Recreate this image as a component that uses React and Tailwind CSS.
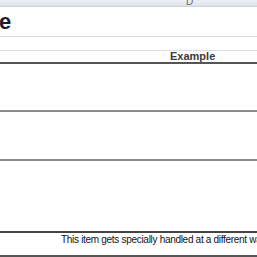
import React from "react";

const rows = [
  { h: "h-[48px]", line: "border-b-[#8a8a8a]" },
  { h: "h-[49px]", line: "border-b-[#8a8a8a]" },
  { h: "h-[72px]", line: "border-b-[#444]" },
];

export default function App() {
  return (
    <div className="w-[257px] h-[257px] overflow-hidden bg-white font-['Liberation_Sans',Arial,sans-serif]">
      {/* top bar */}
      <div className="h-[7px] bg-gradient-to-b from-[#eef1f6] to-[#dde2ea] border-b border-[#cfd5df] relative">
        <span className="absolute left-[186px] -top-[6px] text-[10px] text-[#666]">D</span>
      </div>

      {/* title */}
      <div className="h-[30px] border-b border-[#dcdcdc] flex items-center">
        <span className="text-[22px] font-bold text-[#1a1d33] -ml-[1px] leading-none">e</span>
      </div>

      <div className="h-[13px]" />

      {/* header row */}
      <div className="border-t border-[#dcdcdc] h-[14px] flex border-b-2 border-b-[#555]">
        <div className="w-[170px]" />
        <div className="text-[11px] font-bold text-[#3a3a3a] leading-[11px]">Example</div>
      </div>

      {rows.map((r, i) => (
        <div key={i} className={`${r.h} border-b-2 ${r.line}`} />
      ))}

      <div className="h-[24px] border-b-2 border-b-[#555] pt-[1px]">
        <span className="block pl-[61px] text-[10px] leading-[12px] tracking-[-0.3px] text-[#111] whitespace-nowrap">
          This item gets specially handled at a different way
        </span>
      </div>
    </div>
  );
}
